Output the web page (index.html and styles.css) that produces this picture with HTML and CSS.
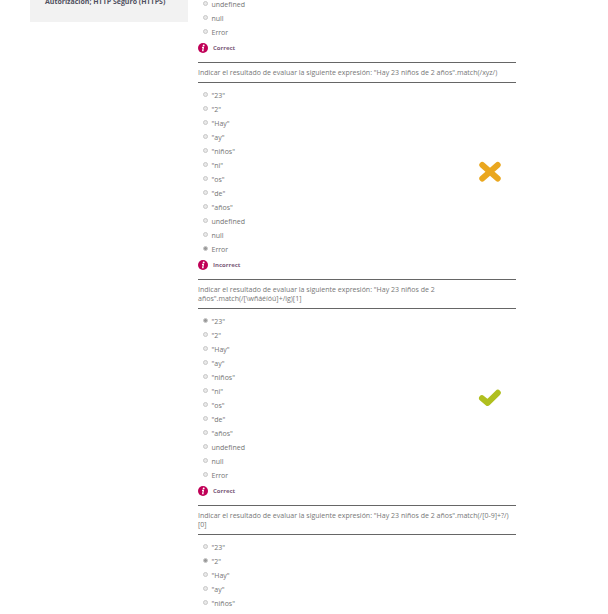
FILE: index.html
```
<!DOCTYPE html>
<html lang="es">
<head>
<meta charset="utf-8">
<title>Autoevaluación</title>
<link rel="stylesheet" href="styles.css">
</head>
<body>
<svg width="0" height="0" class="defs" aria-hidden="true">
  <symbol id="info" viewBox="0 0 10 10"><circle cx="5" cy="5" r="5" fill="#c00057"/><circle cx="5.7" cy="2.4" r=".95" fill="#fff"/><path d="M4 4.3h1.4L4.7 7.7h.9" fill="none" stroke="#fff" stroke-width="1.2"/></symbol>
  <symbol id="cross" viewBox="0 0 24 22"><path d="M4.3 4 19.7 17.6M19.7 4 4.3 17.6" fill="none" stroke="#eaa71f" stroke-width="6" stroke-linecap="round"/></symbol>
  <symbol id="tick" viewBox="0 0 24 22"><path d="M4 11.2 9.6 15.9 19.8 5.8" fill="none" stroke="#b0bf1e" stroke-width="6" stroke-linecap="round" stroke-linejoin="round"/></symbol>
</svg>
<div class="page">
  <aside class="side"><span>Autorización; HTTP Seguro (HTTPS)</span></aside>
  <main class="quiz">
    <section class="question">
      <ul class="options first">
        <li><i class="radio"></i>undefined</li><li><i class="radio"></i>null</li><li><i class="radio"></i>Error</li>
      </ul>
      <p class="feedback"><svg><use href="#info"/></svg><span>Correct</span></p>
    </section>
    <section class="question">
      <h2>Indicar el resultado de evaluar la siguiente expresión: "Hay 23 niños de 2 años".match(/xyz/)</h2>
      <div class="body">
        <ul class="options">
          <li><i class="radio"></i>"23"</li><li><i class="radio"></i>"2"</li><li><i class="radio"></i>"Hay"</li><li><i class="radio"></i>"ay"</li><li><i class="radio"></i>"niños"</li><li><i class="radio"></i>"ni"</li><li><i class="radio"></i>"os"</li><li><i class="radio"></i>"de"</li><li><i class="radio"></i>"años"</li><li><i class="radio"></i>undefined</li><li><i class="radio"></i>null</li><li><i class="radio on"></i>Error</li>
        </ul>
        <svg class="mark"><use href="#cross"/></svg>
      </div>
      <p class="feedback"><svg><use href="#info"/></svg><span>Incorrect</span></p>
    </section>
    <section class="question">
      <h2>Indicar el resultado de evaluar la siguiente expresión: "Hay 23 niños de 2<br>años".match(/[\wñáéíóú]+/ig)[1]</h2>
      <div class="body">
        <ul class="options">
          <li><i class="radio on"></i>"23"</li><li><i class="radio"></i>"2"</li><li><i class="radio"></i>"Hay"</li><li><i class="radio"></i>"ay"</li><li><i class="radio"></i>"niños"</li><li><i class="radio"></i>"ni"</li><li><i class="radio"></i>"os"</li><li><i class="radio"></i>"de"</li><li><i class="radio"></i>"años"</li><li><i class="radio"></i>undefined</li><li><i class="radio"></i>null</li><li><i class="radio"></i>Error</li>
        </ul>
        <svg class="mark"><use href="#tick"/></svg>
      </div>
      <p class="feedback"><svg><use href="#info"/></svg><span>Correct</span></p>
    </section>
    <section class="question">
      <h2>Indicar el resultado de evaluar la siguiente expresión: "Hay 23 niños de 2 años".match(/[0-9]+?/)<br>[0]</h2>
      <ul class="options">
        <li><i class="radio"></i>"23"</li><li><i class="radio on"></i>"2"</li><li><i class="radio"></i>"Hay"</li><li><i class="radio"></i>"ay"</li><li><i class="radio"></i>"niños"</li>
      </ul>
    </section>
  </main>
</div>
</body>
</html>
```
FILE: styles.css
```
* { box-sizing: border-box; margin: 0; padding: 0; }
body { background: #fff; color: #747474; font: 7px/9px "Open Sans", sans-serif; height: 614px; overflow: hidden; }
.defs { position: absolute; }
.page { display: flex; align-items: flex-start; gap: 10px; padding-left: 30px; height: 614px; overflow: hidden; }
.side { width: 158px; height: 22px; background: #f2f2f2; padding-left: 15px; white-space: nowrap; font-weight: 700; color: #505060; }
.side span { display: block; margin-top: -3px; }
.quiz { width: 318px; }
.question h2 { font-size: 7.02px; font-weight: 400; line-height: 9px; padding: 5px 0; border-top: 1px solid #666; border-bottom: 1px solid #666; white-space: nowrap; color: #777; }
.body { display: flex; justify-content: space-between; align-items: center; padding-right: 14px; }
.options { list-style: none; padding: 6px 0 0 5px; }
.options.first { padding-top: 0; margin-top: -2px; }
.options li { display: flex; align-items: center; height: 14px; line-height: 14px; white-space: nowrap; }
.radio { width: 5px; height: 5px; margin: 0 3.5px 3px 0; border: 1px solid #c8c8c8; border-radius: 50%; background: #e8e8e8; }
.radio.on { background: #999; }
.mark { width: 24px; height: 22px; margin-top: 4px; }
.feedback { display: flex; align-items: center; height: 16px; gap: 5px; margin-bottom: 6px; font-size: 6px; font-weight: 700; color: #7c5c7a; }
.feedback svg { width: 10px; height: 10px; }
```
